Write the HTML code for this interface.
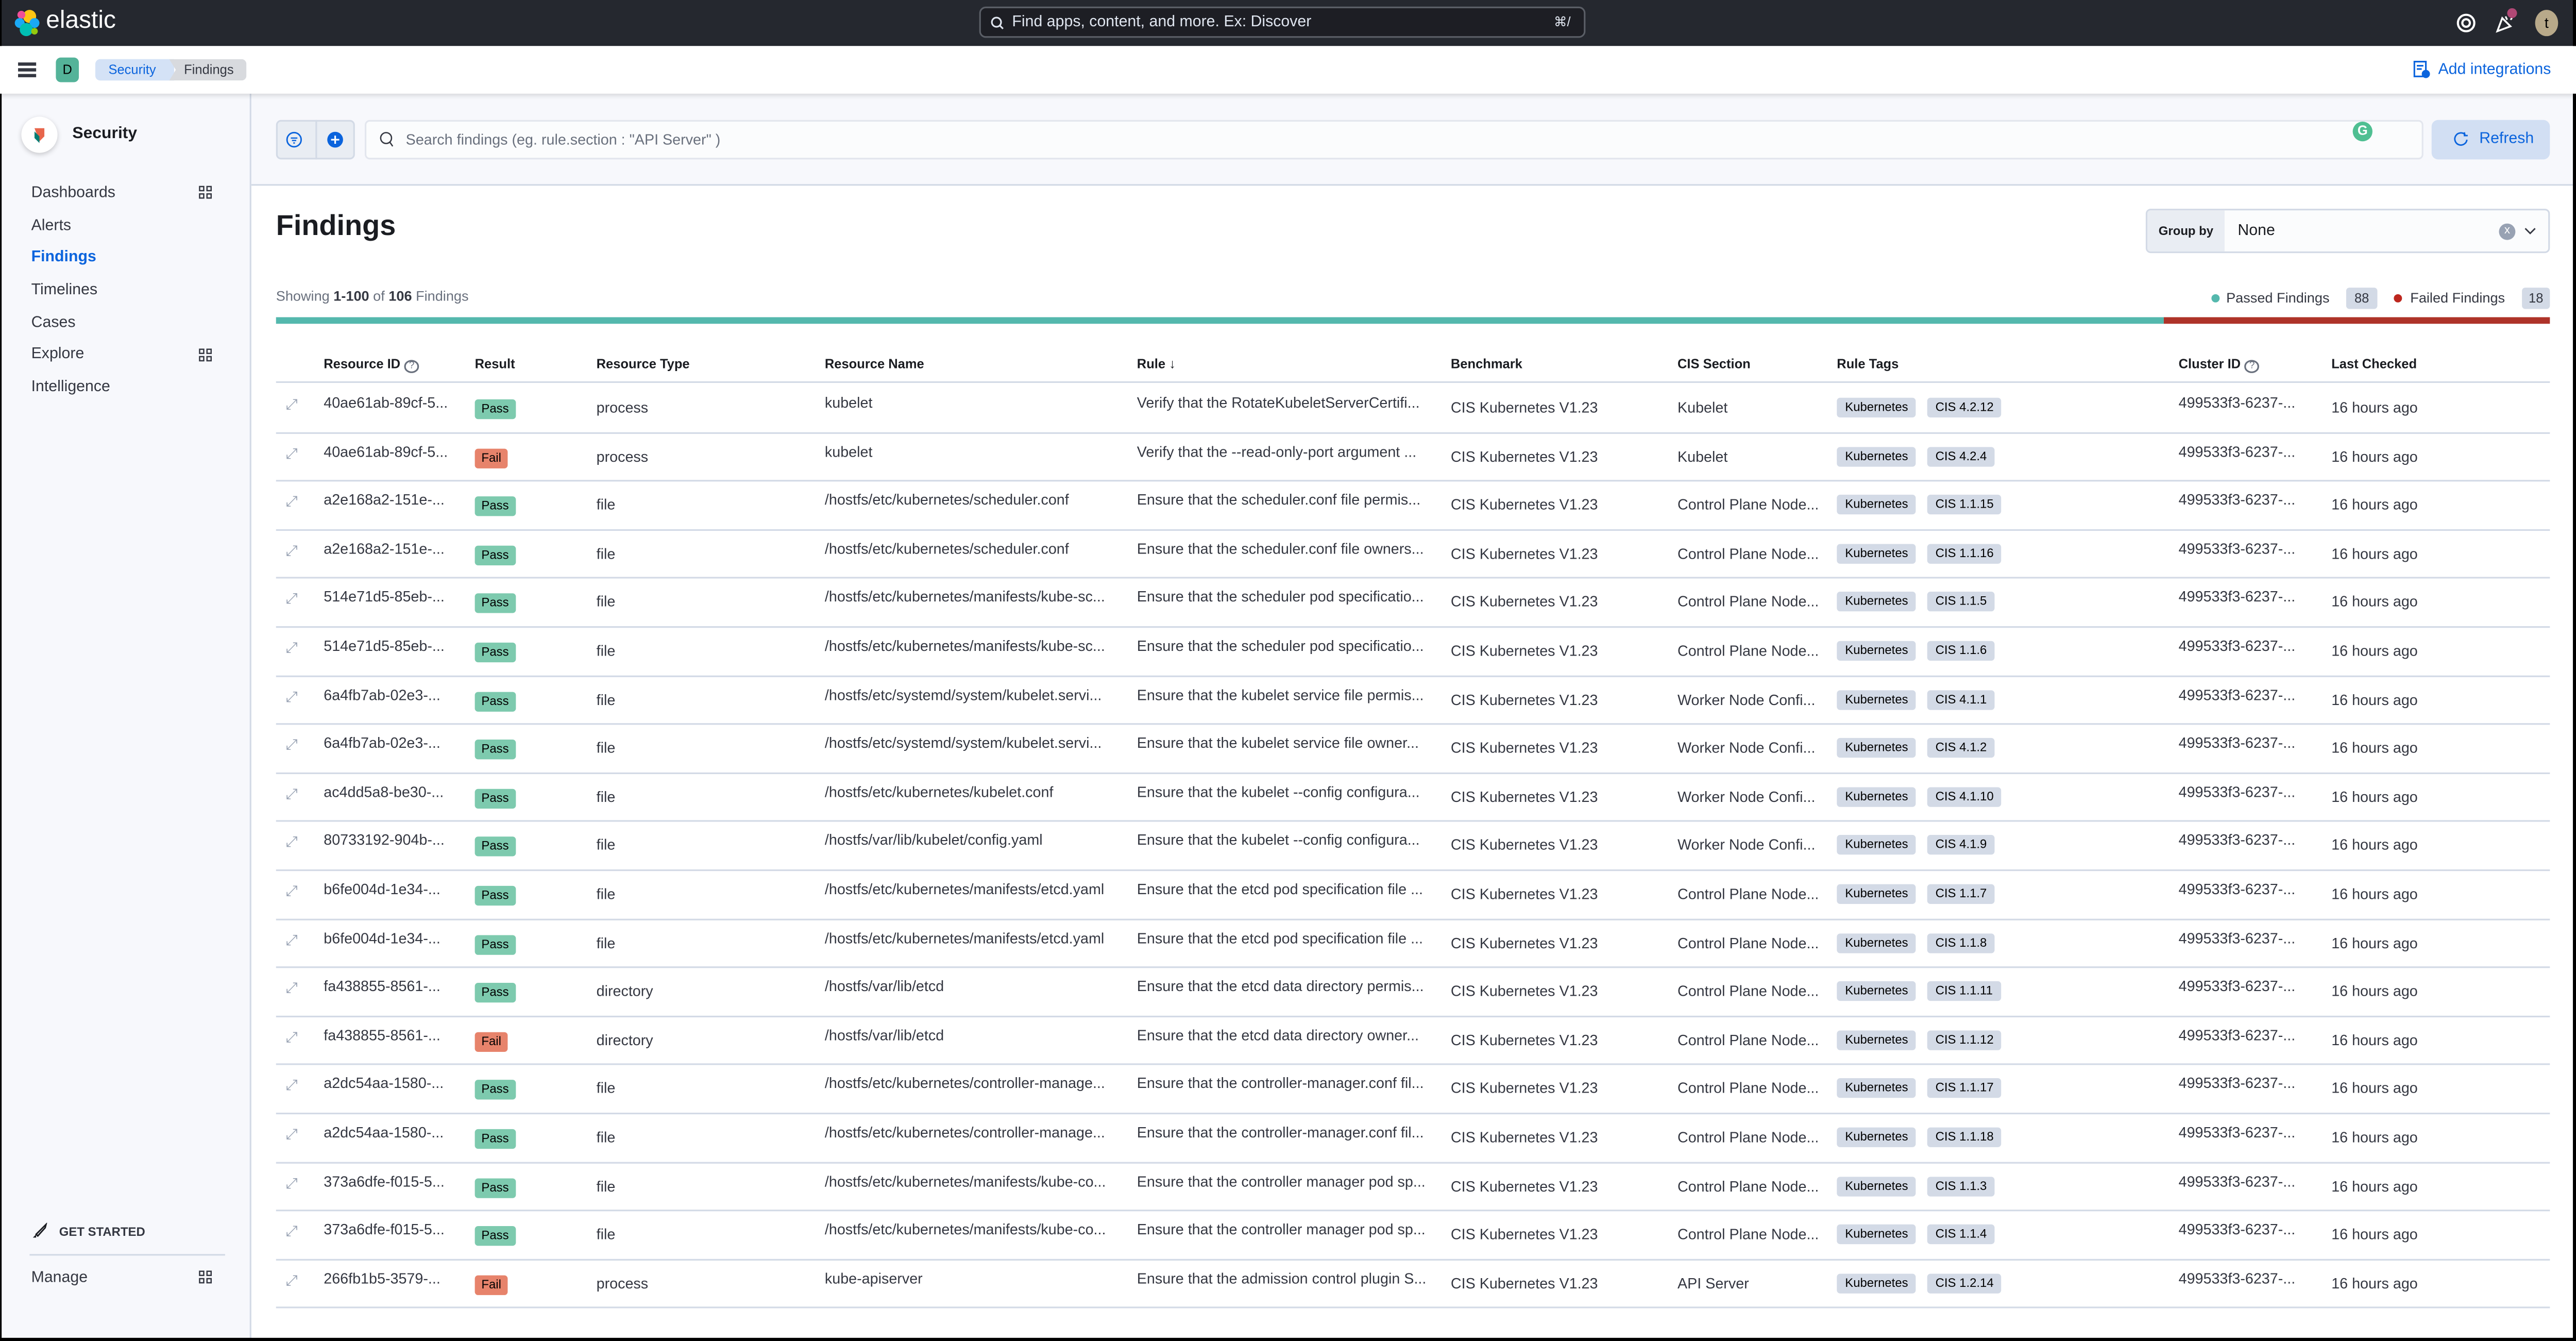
<!DOCTYPE html>
<html><head><meta charset="utf-8">
<style>
html,body{margin:0;padding:0;background:#000;}
body{width:5088px;height:2602px;overflow:hidden;position:relative;}
#root{transform:scale(3.189);transform-origin:0 0;position:absolute;left:0;top:0;width:1596px;height:816px;overflow:hidden;font-family:"Liberation Sans",sans-serif;color:#343741;background:#fff;}
.abs{position:absolute;}
.top{left:0;top:0;width:1568px;height:28px;background:#25282f;}
.srch{left:596px;top:4px;width:369px;height:19px;border:1px solid #5a5e66;border-radius:4px;background:#1d1e24;box-sizing:border-box;color:#dfe5ef;font-size:9.5px;line-height:17px;padding-left:19px;}
.hdr2{left:0;top:28px;width:1568px;height:29px;background:#fff;box-shadow:0 1px 3px rgba(0,0,0,.15);z-index:2;}
.side{left:0;top:57px;width:152px;height:759px;background:#f7f8fc;border-right:1px solid #d3dae6;}
.nav{left:19px;font-size:9.5px;color:#343741;}
.main{left:153px;top:57px;width:1415px;height:759px;background:#fff;}
.fbar{left:0;top:0;width:1415px;height:55px;background:#f7f8fc;border-bottom:1px solid #d3dae6;}
.th{top:217px;font-size:8px;font-weight:bold;color:#1a1c21;}
.row{position:absolute;left:168px;width:1384px;height:29.6px;border-bottom:1px solid #d3dae6;font-size:9px;color:#343741;}
.row span{position:absolute;white-space:nowrap;}
.badge{border-radius:2px;font-size:7.5px;padding:0 4px;height:12px;line-height:12px;color:#000;}
.pass{background:#7dcaae;}
.fail{background:#e7836b;}
.tag{background:#d3dae6;border-radius:2px;font-size:7.5px;padding:0 5px;height:12px;line-height:12px;color:#000;}
</style></head><body><div id="root">
<div class="abs top">
 <svg class="abs" style="left:8px;top:5px" width="18" height="18" viewBox="0 0 18 18"><circle cx="10" cy="5" r="4" fill="#fec514"/><circle cx="5" cy="4" r="2.4" fill="#f04e98"/><circle cx="13" cy="9" r="3" fill="#1ba9f5"/><circle cx="4" cy="9" r="3" fill="#1ba9f5"/><circle cx="8" cy="13" r="4" fill="#00bfb3"/><circle cx="13" cy="14" r="2" fill="#93c90e"/></svg>
 <div class="abs" style="left:28px;top:4px;color:#fff;font-size:15px;">elastic</div>
 <div class="abs srch"><svg class="abs" style="left:6px;top:5px" width="8" height="8" viewBox="0 0 8 8"><circle cx="3.5" cy="3.5" r="2.8" fill="none" stroke="#dfe5ef" stroke-width="1"/><path d="M5.5 5.5L7.5 7.5" stroke="#dfe5ef"/></svg>Find apps, content, and more. Ex: Discover<span class="abs" style="right:8px;top:0;font-size:8px;">⌘/</span></div>
 <svg class="abs" style="left:1495px;top:8px" width="12" height="12" viewBox="0 0 12 12"><circle cx="6" cy="6" r="5" fill="none" stroke="#fff" stroke-width="1.3"/><circle cx="6" cy="6" r="2.3" fill="none" stroke="#fff" stroke-width="1.3"/></svg>
 <svg class="abs" style="left:1519px;top:8px" width="12" height="12" viewBox="0 0 12 12"><path d="M1 11L4 3L9 8Z" fill="none" stroke="#fff" stroke-width="1.1"/><path d="M6 2L7 4M9 4L10 3" stroke="#fff"/></svg>
 <div class="abs" style="left:1526px;top:5px;width:6px;height:6px;border-radius:50%;background:#b04875"></div>
 <div class="abs" style="left:1543px;top:6px;width:14px;height:16px;border-radius:50%;background:#b8a98a;color:#000;font-size:9px;text-align:center;line-height:16px;">t</div>
</div>
<div class="abs hdr2">
 <div class="abs" style="left:11px;top:10px;width:11px;height:1.5px;background:#343741;box-shadow:0 3.5px 0 #343741,0 7px 0 #343741"></div>
 <div class="abs" style="left:34px;top:7px;width:14px;height:15px;border-radius:3px;background:#54b399;color:#000;font-size:8px;text-align:center;line-height:15px;">D</div>
 <div class="abs" style="left:58px;top:8px;width:48px;height:13px;background:#d4e2f6;border-radius:3px 0 0 3px;color:#0b64dd;font-size:8px;line-height:13px;padding-left:8px;box-sizing:border-box;">Security</div>
 <div class="abs" style="left:103px;top:8px;width:47px;height:13px;background:#d8dade;border-radius:0 3px 3px 0;font-size:8px;line-height:13px;padding-left:9px;box-sizing:border-box;clip-path:polygon(0 0,100% 0,100% 100%,0 100%,4px 50%);">Findings</div>
 <svg class="abs" style="left:1469px;top:9px" width="10" height="11" viewBox="0 0 10 11"><rect x="0.5" y="0.5" width="7" height="9" fill="none" stroke="#0b64dd"/><path d="M2 3h4M2 5h3" stroke="#0b64dd"/><circle cx="7.5" cy="8" r="2.5" fill="#0b64dd"/></svg>
 <div class="abs" style="left:1484px;top:9px;color:#0b64dd;font-size:9.5px;">Add integrations</div>
</div>
<div class="abs side">
 <div class="abs" style="left:13px;top:14px;width:22px;height:22px;border-radius:50%;background:#fff;box-shadow:0 1px 3px rgba(0,0,0,.2)"></div>
 <svg class="abs" style="left:19px;top:19px" width="10" height="12" viewBox="0 0 10 12"><path d="M2 2h6v5l-3 3z" fill="#e7664c"/><path d="M2 4v4l3 3V7z" fill="#017d73"/></svg>
 <div class="abs" style="left:44px;top:19px;font-size:10px;font-weight:bold;color:#1a1c21">Security</div>
 <div class="abs nav" style="top:55px">Dashboards</div>
 <div class="abs nav" style="top:75px">Alerts</div>
 <div class="abs nav" style="top:94px;color:#0b64dd;font-weight:bold">Findings</div>
 <div class="abs nav" style="top:114px">Timelines</div>
 <div class="abs nav" style="top:134px">Cases</div>
 <div class="abs nav" style="top:153px">Explore</div>
 <div class="abs nav" style="top:173px">Intelligence</div>
 <svg class="abs" style="left:121px;top:56px" width="8" height="8" viewBox="0 0 8 8" fill="none" stroke="#343741" stroke-width=".8"><rect x=".5" y=".5" width="2.5" height="2.5"/><rect x="5" y=".5" width="2.5" height="2.5"/><rect x=".5" y="5" width="2.5" height="2.5"/><rect x="5" y="5" width="2.5" height="2.5"/></svg>
 <svg class="abs" style="left:121px;top:155px" width="8" height="8" viewBox="0 0 8 8" fill="none" stroke="#343741" stroke-width=".8"><rect x=".5" y=".5" width="2.5" height="2.5"/><rect x="5" y=".5" width="2.5" height="2.5"/><rect x=".5" y="5" width="2.5" height="2.5"/><rect x="5" y="5" width="2.5" height="2.5"/></svg>
 <svg class="abs" style="left:19px;top:687px" width="10" height="10" viewBox="0 0 10 10"><path d="M3 7L8 2L9 1L8.5 3L4 8Z" fill="none" stroke="#1a1c21" stroke-width=".9"/><path d="M1 9L3 7L3 9Z" fill="#1a1c21"/></svg>
 <div class="abs" style="left:36px;top:688px;font-size:7.5px;font-weight:bold;color:#343741">GET STARTED</div>
 <div class="abs" style="left:18px;top:706px;width:119px;height:1px;background:#d3dae6"></div>
 <div class="abs nav" style="top:715px">Manage</div>
 <svg class="abs" style="left:121px;top:716px" width="8" height="8" viewBox="0 0 8 8" fill="none" stroke="#343741" stroke-width=".8"><rect x=".5" y=".5" width="2.5" height="2.5"/><rect x="5" y=".5" width="2.5" height="2.5"/><rect x=".5" y="5" width="2.5" height="2.5"/><rect x="5" y="5" width="2.5" height="2.5"/></svg>
</div>
<div class="abs main">
 <div class="abs fbar">
  <div class="abs" style="left:15px;top:16px;width:48px;height:24px;background:#e9edf3;border:1px solid #d3dae6;border-radius:3px;box-sizing:border-box"></div>
  <div class="abs" style="left:39px;top:16px;width:1px;height:24px;background:#d3dae6"></div>
  <svg class="abs" style="left:21px;top:23px" width="10" height="10" viewBox="0 0 10 10"><circle cx="5" cy="5" r="4.3" fill="none" stroke="#0b64dd" stroke-width=".9"/><path d="M3 4h4M3.7 5.5h2.6M4.5 7h1" stroke="#0b64dd" stroke-width=".8"/></svg>
  <svg class="abs" style="left:46px;top:23px" width="10" height="10" viewBox="0 0 10 10"><circle cx="5" cy="5" r="4.8" fill="#0b64dd"/><path d="M5 2.5v5M2.5 5h5" stroke="#fff"/></svg>
  <div class="abs" style="left:69px;top:16px;width:1253px;height:24px;background:#fbfcfd;border:1px solid #e3e6ee;border-radius:3px;box-sizing:border-box;font-size:9px;color:#69707d;line-height:22px;padding-left:24px;">Search findings (eg. rule.section : "API Server" )</div>
  <svg class="abs" style="left:78px;top:23px" width="9" height="10" viewBox="0 0 9 10"><circle cx="4" cy="4" r="3.3" fill="none" stroke="#343741" stroke-width=".8"/><path d="M6.3 6.5L8 9" stroke="#343741" stroke-width=".8"/></svg>
  <div class="abs" style="left:1279px;top:17px;width:12px;height:12px;border-radius:50%;background:#4fbf92;color:#fff;font-size:8px;font-weight:bold;text-align:center;line-height:12px">G</div>
  <div class="abs" style="left:1327px;top:16px;width:72px;height:24px;background:#d2dff3;border-radius:4px;color:#0b64dd;font-size:9.5px;line-height:24px;padding-left:29px;box-sizing:border-box">Refresh</div>
  <svg class="abs" style="left:1340px;top:23px" width="10" height="10" viewBox="0 0 10 10"><path d="M7.5 2A3.7 3.7 0 1 0 8.5 5" fill="none" stroke="#0b64dd" stroke-width=".9"/><path d="M7 .5v2h2" fill="none" stroke="#0b64dd" stroke-width=".9"/></svg>
 </div>
</div>
<div class="abs" style="left:168px;top:127px;font-size:17.5px;font-weight:bold;color:#1a1c21">Findings</div>
<div class="abs" style="left:1306px;top:127px;width:246px;height:27px;border:1px solid #d3dae6;border-radius:3px;box-sizing:border-box;background:#fbfcfd;overflow:hidden">
 <div class="abs" style="left:0;top:0;width:47px;height:27px;background:#e9edf3;font-size:7.5px;font-weight:bold;color:#1a1c21;line-height:25px;text-align:center">Group by</div>
 <div class="abs" style="left:55px;top:0;font-size:9.5px;line-height:25px;color:#1a1c21">None</div>
 <div class="abs" style="left:214px;top:8px;width:10px;height:10px;border-radius:50%;background:#98a2b3;color:#fff;font-size:7px;text-align:center;line-height:10px">x</div>
 <svg class="abs" style="left:229px;top:10px" width="8" height="6" viewBox="0 0 8 6"><path d="M1 1l3 3 3-3" fill="none" stroke="#343741" stroke-width=".9"/></svg>
</div>
<div class="abs" style="left:168px;top:175px;font-size:8.5px;color:#69707d">Showing <b style="color:#343741">1-100</b> of <b style="color:#343741">106</b> Findings</div>
<div class="abs" style="left:1346px;top:179px;width:5px;height:5px;border-radius:50%;background:#54b8ad"></div>
<div class="abs" style="left:1355px;top:176px;font-size:8.5px;color:#343741">Passed Findings</div>
<div class="abs" style="left:1428px;top:175px;width:19px;height:13px;background:#d3dae6;border-radius:2px;font-size:8px;text-align:center;line-height:13px">88</div>
<div class="abs" style="left:1457px;top:179px;width:5px;height:5px;border-radius:50%;background:#bd271e"></div>
<div class="abs" style="left:1467px;top:176px;font-size:8.5px;color:#343741">Failed Findings</div>
<div class="abs" style="left:1535px;top:175px;width:17px;height:13px;background:#d3dae6;border-radius:2px;font-size:8px;text-align:center;line-height:13px">18</div>
<div class="abs" style="left:168px;top:193px;width:1149px;height:4px;background:#54b8ad"></div>
<div class="abs" style="left:1317px;top:193px;width:235px;height:4px;background:#ae3329"></div>
<div class="abs th" style="left:197px">Resource ID <span style="font-weight:normal;color:#69707d;border:.8px solid #69707d;border-radius:50%;font-size:6px;padding:0 2px">?</span></div>
<div class="abs th" style="left:289px">Result</div>
<div class="abs th" style="left:363px">Resource Type</div>
<div class="abs th" style="left:502px">Resource Name</div>
<div class="abs th" style="left:692px">Rule ↓</div>
<div class="abs th" style="left:883px">Benchmark</div>
<div class="abs th" style="left:1021px">CIS Section</div>
<div class="abs th" style="left:1118px">Rule Tags</div>
<div class="abs th" style="left:1326px">Cluster ID <span style="font-weight:normal;color:#69707d;border:.8px solid #69707d;border-radius:50%;font-size:6px;padding:0 2px">?</span></div>
<div class="abs th" style="left:1419px">Last Checked</div>
<div class="abs" style="left:168px;top:232px;width:1384px;height:1px;background:#d3dae6"></div>

<div class="row" style="top:233px"><span style="left:6px;top:8px;color:#98a2b3">⤢</span><span style="left:29px;top:7px">40ae61ab-89cf-5...</span><span class="badge pass" style="left:121px;top:10px">Pass</span><span style="left:195px;top:10px">process</span><span style="left:334px;top:7px">kubelet</span><span style="left:524px;top:7px">Verify that the RotateKubeletServerCertifi...</span><span style="left:715px;top:10px">CIS Kubernetes V1.23</span><span style="left:853px;top:10px">Kubelet</span><span class="tag" style="left:950px;top:9px">Kubernetes</span><span class="tag" style="left:1005px;top:9px">CIS 4.2.12</span><span style="left:1158px;top:7px">499533f3-6237-...</span><span style="left:1251px;top:10px">16 hours ago</span></div>
<div class="row" style="top:262.6px"><span style="left:6px;top:8px;color:#98a2b3">⤢</span><span style="left:29px;top:7px">40ae61ab-89cf-5...</span><span class="badge fail" style="left:121px;top:10px">Fail</span><span style="left:195px;top:10px">process</span><span style="left:334px;top:7px">kubelet</span><span style="left:524px;top:7px">Verify that the --read-only-port argument ...</span><span style="left:715px;top:10px">CIS Kubernetes V1.23</span><span style="left:853px;top:10px">Kubelet</span><span class="tag" style="left:950px;top:9px">Kubernetes</span><span class="tag" style="left:1005px;top:9px">CIS 4.2.4</span><span style="left:1158px;top:7px">499533f3-6237-...</span><span style="left:1251px;top:10px">16 hours ago</span></div>
<div class="row" style="top:292.2px"><span style="left:6px;top:8px;color:#98a2b3">⤢</span><span style="left:29px;top:7px">a2e168a2-151e-...</span><span class="badge pass" style="left:121px;top:10px">Pass</span><span style="left:195px;top:10px">file</span><span style="left:334px;top:7px">/hostfs/etc/kubernetes/scheduler.conf</span><span style="left:524px;top:7px">Ensure that the scheduler.conf file permis...</span><span style="left:715px;top:10px">CIS Kubernetes V1.23</span><span style="left:853px;top:10px">Control Plane Node...</span><span class="tag" style="left:950px;top:9px">Kubernetes</span><span class="tag" style="left:1005px;top:9px">CIS 1.1.15</span><span style="left:1158px;top:7px">499533f3-6237-...</span><span style="left:1251px;top:10px">16 hours ago</span></div>
<div class="row" style="top:321.8px"><span style="left:6px;top:8px;color:#98a2b3">⤢</span><span style="left:29px;top:7px">a2e168a2-151e-...</span><span class="badge pass" style="left:121px;top:10px">Pass</span><span style="left:195px;top:10px">file</span><span style="left:334px;top:7px">/hostfs/etc/kubernetes/scheduler.conf</span><span style="left:524px;top:7px">Ensure that the scheduler.conf file owners...</span><span style="left:715px;top:10px">CIS Kubernetes V1.23</span><span style="left:853px;top:10px">Control Plane Node...</span><span class="tag" style="left:950px;top:9px">Kubernetes</span><span class="tag" style="left:1005px;top:9px">CIS 1.1.16</span><span style="left:1158px;top:7px">499533f3-6237-...</span><span style="left:1251px;top:10px">16 hours ago</span></div>
<div class="row" style="top:351.4px"><span style="left:6px;top:8px;color:#98a2b3">⤢</span><span style="left:29px;top:7px">514e71d5-85eb-...</span><span class="badge pass" style="left:121px;top:10px">Pass</span><span style="left:195px;top:10px">file</span><span style="left:334px;top:7px">/hostfs/etc/kubernetes/manifests/kube-sc...</span><span style="left:524px;top:7px">Ensure that the scheduler pod specificatio...</span><span style="left:715px;top:10px">CIS Kubernetes V1.23</span><span style="left:853px;top:10px">Control Plane Node...</span><span class="tag" style="left:950px;top:9px">Kubernetes</span><span class="tag" style="left:1005px;top:9px">CIS 1.1.5</span><span style="left:1158px;top:7px">499533f3-6237-...</span><span style="left:1251px;top:10px">16 hours ago</span></div>
<div class="row" style="top:381px"><span style="left:6px;top:8px;color:#98a2b3">⤢</span><span style="left:29px;top:7px">514e71d5-85eb-...</span><span class="badge pass" style="left:121px;top:10px">Pass</span><span style="left:195px;top:10px">file</span><span style="left:334px;top:7px">/hostfs/etc/kubernetes/manifests/kube-sc...</span><span style="left:524px;top:7px">Ensure that the scheduler pod specificatio...</span><span style="left:715px;top:10px">CIS Kubernetes V1.23</span><span style="left:853px;top:10px">Control Plane Node...</span><span class="tag" style="left:950px;top:9px">Kubernetes</span><span class="tag" style="left:1005px;top:9px">CIS 1.1.6</span><span style="left:1158px;top:7px">499533f3-6237-...</span><span style="left:1251px;top:10px">16 hours ago</span></div>
<div class="row" style="top:410.6px"><span style="left:6px;top:8px;color:#98a2b3">⤢</span><span style="left:29px;top:7px">6a4fb7ab-02e3-...</span><span class="badge pass" style="left:121px;top:10px">Pass</span><span style="left:195px;top:10px">file</span><span style="left:334px;top:7px">/hostfs/etc/systemd/system/kubelet.servi...</span><span style="left:524px;top:7px">Ensure that the kubelet service file permis...</span><span style="left:715px;top:10px">CIS Kubernetes V1.23</span><span style="left:853px;top:10px">Worker Node Confi...</span><span class="tag" style="left:950px;top:9px">Kubernetes</span><span class="tag" style="left:1005px;top:9px">CIS 4.1.1</span><span style="left:1158px;top:7px">499533f3-6237-...</span><span style="left:1251px;top:10px">16 hours ago</span></div>
<div class="row" style="top:440.2px"><span style="left:6px;top:8px;color:#98a2b3">⤢</span><span style="left:29px;top:7px">6a4fb7ab-02e3-...</span><span class="badge pass" style="left:121px;top:10px">Pass</span><span style="left:195px;top:10px">file</span><span style="left:334px;top:7px">/hostfs/etc/systemd/system/kubelet.servi...</span><span style="left:524px;top:7px">Ensure that the kubelet service file owner...</span><span style="left:715px;top:10px">CIS Kubernetes V1.23</span><span style="left:853px;top:10px">Worker Node Confi...</span><span class="tag" style="left:950px;top:9px">Kubernetes</span><span class="tag" style="left:1005px;top:9px">CIS 4.1.2</span><span style="left:1158px;top:7px">499533f3-6237-...</span><span style="left:1251px;top:10px">16 hours ago</span></div>
<div class="row" style="top:469.8px"><span style="left:6px;top:8px;color:#98a2b3">⤢</span><span style="left:29px;top:7px">ac4dd5a8-be30-...</span><span class="badge pass" style="left:121px;top:10px">Pass</span><span style="left:195px;top:10px">file</span><span style="left:334px;top:7px">/hostfs/etc/kubernetes/kubelet.conf</span><span style="left:524px;top:7px">Ensure that the kubelet --config configura...</span><span style="left:715px;top:10px">CIS Kubernetes V1.23</span><span style="left:853px;top:10px">Worker Node Confi...</span><span class="tag" style="left:950px;top:9px">Kubernetes</span><span class="tag" style="left:1005px;top:9px">CIS 4.1.10</span><span style="left:1158px;top:7px">499533f3-6237-...</span><span style="left:1251px;top:10px">16 hours ago</span></div>
<div class="row" style="top:499.4px"><span style="left:6px;top:8px;color:#98a2b3">⤢</span><span style="left:29px;top:7px">80733192-904b-...</span><span class="badge pass" style="left:121px;top:10px">Pass</span><span style="left:195px;top:10px">file</span><span style="left:334px;top:7px">/hostfs/var/lib/kubelet/config.yaml</span><span style="left:524px;top:7px">Ensure that the kubelet --config configura...</span><span style="left:715px;top:10px">CIS Kubernetes V1.23</span><span style="left:853px;top:10px">Worker Node Confi...</span><span class="tag" style="left:950px;top:9px">Kubernetes</span><span class="tag" style="left:1005px;top:9px">CIS 4.1.9</span><span style="left:1158px;top:7px">499533f3-6237-...</span><span style="left:1251px;top:10px">16 hours ago</span></div>
<div class="row" style="top:529px"><span style="left:6px;top:8px;color:#98a2b3">⤢</span><span style="left:29px;top:7px">b6fe004d-1e34-...</span><span class="badge pass" style="left:121px;top:10px">Pass</span><span style="left:195px;top:10px">file</span><span style="left:334px;top:7px">/hostfs/etc/kubernetes/manifests/etcd.yaml</span><span style="left:524px;top:7px">Ensure that the etcd pod specification file ...</span><span style="left:715px;top:10px">CIS Kubernetes V1.23</span><span style="left:853px;top:10px">Control Plane Node...</span><span class="tag" style="left:950px;top:9px">Kubernetes</span><span class="tag" style="left:1005px;top:9px">CIS 1.1.7</span><span style="left:1158px;top:7px">499533f3-6237-...</span><span style="left:1251px;top:10px">16 hours ago</span></div>
<div class="row" style="top:558.6px"><span style="left:6px;top:8px;color:#98a2b3">⤢</span><span style="left:29px;top:7px">b6fe004d-1e34-...</span><span class="badge pass" style="left:121px;top:10px">Pass</span><span style="left:195px;top:10px">file</span><span style="left:334px;top:7px">/hostfs/etc/kubernetes/manifests/etcd.yaml</span><span style="left:524px;top:7px">Ensure that the etcd pod specification file ...</span><span style="left:715px;top:10px">CIS Kubernetes V1.23</span><span style="left:853px;top:10px">Control Plane Node...</span><span class="tag" style="left:950px;top:9px">Kubernetes</span><span class="tag" style="left:1005px;top:9px">CIS 1.1.8</span><span style="left:1158px;top:7px">499533f3-6237-...</span><span style="left:1251px;top:10px">16 hours ago</span></div>
<div class="row" style="top:588.2px"><span style="left:6px;top:8px;color:#98a2b3">⤢</span><span style="left:29px;top:7px">fa438855-8561-...</span><span class="badge pass" style="left:121px;top:10px">Pass</span><span style="left:195px;top:10px">directory</span><span style="left:334px;top:7px">/hostfs/var/lib/etcd</span><span style="left:524px;top:7px">Ensure that the etcd data directory permis...</span><span style="left:715px;top:10px">CIS Kubernetes V1.23</span><span style="left:853px;top:10px">Control Plane Node...</span><span class="tag" style="left:950px;top:9px">Kubernetes</span><span class="tag" style="left:1005px;top:9px">CIS 1.1.11</span><span style="left:1158px;top:7px">499533f3-6237-...</span><span style="left:1251px;top:10px">16 hours ago</span></div>
<div class="row" style="top:617.8px"><span style="left:6px;top:8px;color:#98a2b3">⤢</span><span style="left:29px;top:7px">fa438855-8561-...</span><span class="badge fail" style="left:121px;top:10px">Fail</span><span style="left:195px;top:10px">directory</span><span style="left:334px;top:7px">/hostfs/var/lib/etcd</span><span style="left:524px;top:7px">Ensure that the etcd data directory owner...</span><span style="left:715px;top:10px">CIS Kubernetes V1.23</span><span style="left:853px;top:10px">Control Plane Node...</span><span class="tag" style="left:950px;top:9px">Kubernetes</span><span class="tag" style="left:1005px;top:9px">CIS 1.1.12</span><span style="left:1158px;top:7px">499533f3-6237-...</span><span style="left:1251px;top:10px">16 hours ago</span></div>
<div class="row" style="top:647.4px"><span style="left:6px;top:8px;color:#98a2b3">⤢</span><span style="left:29px;top:7px">a2dc54aa-1580-...</span><span class="badge pass" style="left:121px;top:10px">Pass</span><span style="left:195px;top:10px">file</span><span style="left:334px;top:7px">/hostfs/etc/kubernetes/controller-manage...</span><span style="left:524px;top:7px">Ensure that the controller-manager.conf fil...</span><span style="left:715px;top:10px">CIS Kubernetes V1.23</span><span style="left:853px;top:10px">Control Plane Node...</span><span class="tag" style="left:950px;top:9px">Kubernetes</span><span class="tag" style="left:1005px;top:9px">CIS 1.1.17</span><span style="left:1158px;top:7px">499533f3-6237-...</span><span style="left:1251px;top:10px">16 hours ago</span></div>
<div class="row" style="top:677px"><span style="left:6px;top:8px;color:#98a2b3">⤢</span><span style="left:29px;top:7px">a2dc54aa-1580-...</span><span class="badge pass" style="left:121px;top:10px">Pass</span><span style="left:195px;top:10px">file</span><span style="left:334px;top:7px">/hostfs/etc/kubernetes/controller-manage...</span><span style="left:524px;top:7px">Ensure that the controller-manager.conf fil...</span><span style="left:715px;top:10px">CIS Kubernetes V1.23</span><span style="left:853px;top:10px">Control Plane Node...</span><span class="tag" style="left:950px;top:9px">Kubernetes</span><span class="tag" style="left:1005px;top:9px">CIS 1.1.18</span><span style="left:1158px;top:7px">499533f3-6237-...</span><span style="left:1251px;top:10px">16 hours ago</span></div>
<div class="row" style="top:706.6px"><span style="left:6px;top:8px;color:#98a2b3">⤢</span><span style="left:29px;top:7px">373a6dfe-f015-5...</span><span class="badge pass" style="left:121px;top:10px">Pass</span><span style="left:195px;top:10px">file</span><span style="left:334px;top:7px">/hostfs/etc/kubernetes/manifests/kube-co...</span><span style="left:524px;top:7px">Ensure that the controller manager pod sp...</span><span style="left:715px;top:10px">CIS Kubernetes V1.23</span><span style="left:853px;top:10px">Control Plane Node...</span><span class="tag" style="left:950px;top:9px">Kubernetes</span><span class="tag" style="left:1005px;top:9px">CIS 1.1.3</span><span style="left:1158px;top:7px">499533f3-6237-...</span><span style="left:1251px;top:10px">16 hours ago</span></div>
<div class="row" style="top:736.2px"><span style="left:6px;top:8px;color:#98a2b3">⤢</span><span style="left:29px;top:7px">373a6dfe-f015-5...</span><span class="badge pass" style="left:121px;top:10px">Pass</span><span style="left:195px;top:10px">file</span><span style="left:334px;top:7px">/hostfs/etc/kubernetes/manifests/kube-co...</span><span style="left:524px;top:7px">Ensure that the controller manager pod sp...</span><span style="left:715px;top:10px">CIS Kubernetes V1.23</span><span style="left:853px;top:10px">Control Plane Node...</span><span class="tag" style="left:950px;top:9px">Kubernetes</span><span class="tag" style="left:1005px;top:9px">CIS 1.1.4</span><span style="left:1158px;top:7px">499533f3-6237-...</span><span style="left:1251px;top:10px">16 hours ago</span></div>
<div class="row" style="top:765.8px"><span style="left:6px;top:8px;color:#98a2b3">⤢</span><span style="left:29px;top:7px">266fb1b5-3579-...</span><span class="badge fail" style="left:121px;top:10px">Fail</span><span style="left:195px;top:10px">process</span><span style="left:334px;top:7px">kube-apiserver</span><span style="left:524px;top:7px">Ensure that the admission control plugin S...</span><span style="left:715px;top:10px">CIS Kubernetes V1.23</span><span style="left:853px;top:10px">API Server</span><span class="tag" style="left:950px;top:9px">Kubernetes</span><span class="tag" style="left:1005px;top:9px">CIS 1.2.14</span><span style="left:1158px;top:7px">499533f3-6237-...</span><span style="left:1251px;top:10px">16 hours ago</span></div>
<div class="row" style="top:795.4px"></div>
<div class="abs" style="left:0;top:814px;width:1596px;height:2px;background:#000"></div>
<div class="abs" style="left:0;top:0;width:1px;height:816px;background:#000"></div>
<div class="abs" style="left:1566px;top:0;width:30px;height:816px;background:#000"></div>
</div></body></html>
